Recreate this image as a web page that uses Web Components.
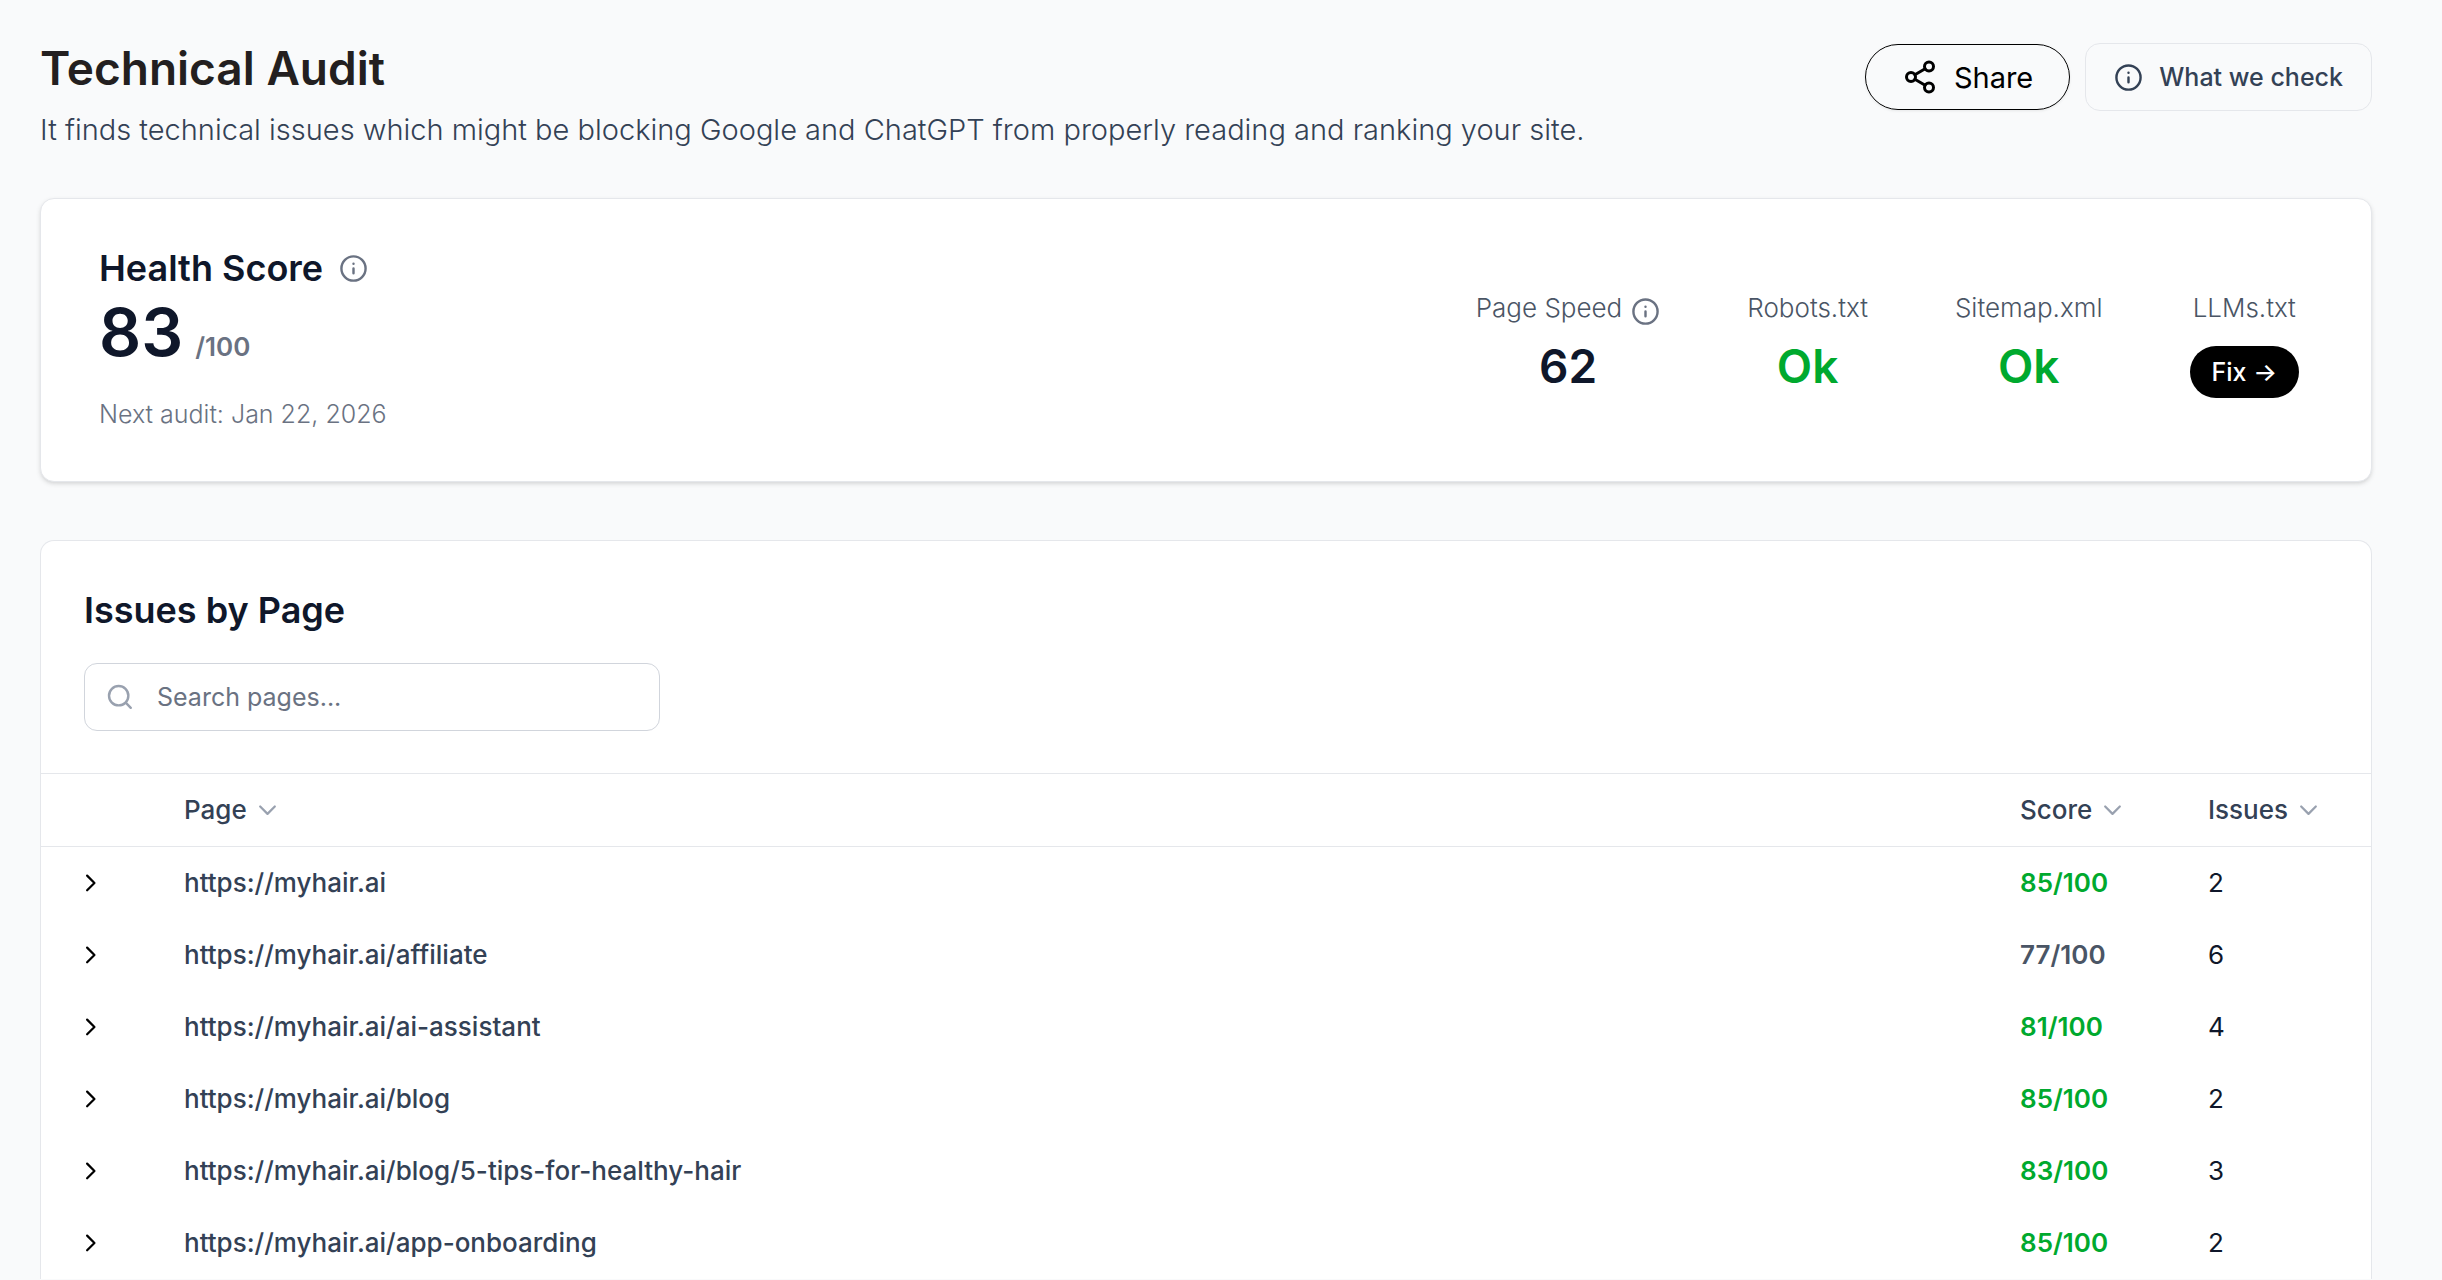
<!DOCTYPE html>
<html lang="en">
<head>
<meta charset="utf-8">
<title>Technical Audit</title>
<style>
body{
    margin: 0;
    background: #f9fafb;
    color: #0f172a;
    font-family: Inter, "Liberation Sans", sans-serif;
    font-size: 26px;
    line-height: 36px;
}
</style>
</head>
<body>
<audit-page>
    <audit-header slot="header" heading="Technical Audit">
        It finds technical issues which might be blocking Google and ChatGPT from properly reading and ranking your site.
    </audit-header>
    <health-card score="83" next="Jan 22, 2026">
        <stat-item label="Page Speed" info>62</stat-item>
        <stat-item label="Robots.txt" state="ok">Ok</stat-item>
        <stat-item label="Sitemap.xml" state="ok">Ok</stat-item>
        <stat-item label="LLMs.txt" state="fix">Fix →</stat-item>
    </health-card>
    <issues-card></issues-card>
</audit-page>

<script>
const ICONS = {
    info: '<circle cx="12" cy="12" r="10"/><path d="M12 16v-4M12 8h.01"/>',
    share: '<circle cx="18" cy="5" r="3"/><circle cx="6" cy="12" r="3"/><circle cx="18" cy="19" r="3"/><path d="M8.59 13.51l6.83 3.98M15.41 6.51l-6.82 3.98"/>',
    search: '<circle cx="10.5" cy="10.5" r="8"/><path d="M16.3 16.3L20.5 20.5"/>',
    down: '<path d="M5.5 8.5l6.500 6.500 6.500-6.500"/>',
    right: '<path d="M9 5l6.500 6.500-6.500 6.500"/>'
};

class UiIcon extends HTMLElement{
    constructor(){
        super();
        this.attachShadow({mode: 'open'});
    }

    connectedCallback(){
        const size = this.getAttribute('size') || 29;
        this.shadowRoot.innerHTML = `
        <style>
        :host{
            display: inline-flex;
            flex: none;
        }
        </style>
        <svg width="${size}" height="${size}" viewBox="0 0 24 24" fill="none" stroke="currentColor"
            stroke-width="2" stroke-linecap="round" stroke-linejoin="round" aria-hidden="true">${ICONS[this.getAttribute('name')]}</svg>
        `;
    }
}

class AuditPage extends HTMLElement{
    constructor(){
        super();
        this.attachShadow({mode: 'open'}).innerHTML = `
        <style>
        :host{
            display: block;
            padding: 38px 70px 0 40px;
        }
        main{
            display: flex;
            flex-direction: column;
            gap: 58px;
            margin-top: 46px;
        }
        </style>
        <slot name="header"></slot>
        <main><slot></slot></main>
        `;
    }
}

class AuditHeader extends HTMLElement{
    constructor(){
        super();
        this.attachShadow({mode: 'open'}).innerHTML = `
        <style>
        :host{
            display: flex;
            justify-content: space-between;
            align-items: flex-start;
        }
        h1{
            margin: 0;
            color: #231f20;
            font-size: 46px;
            font-weight: 600;
            line-height: 60px;
        }
        p{
            margin: 10px 0 0;
            color: #334155;
            font-size: 29px;
            font-weight: 300;
            line-height: 44px;
        }
        .actions{
            display: flex;
            align-items: center;
            gap: 15px;
            padding-top: 5px;
        }
        button{
            display: flex;
            align-items: center;
            box-sizing: border-box;
            font-family: inherit;
            background: transparent;
        }
        .share{
            height: 66px;
            padding: 0 36px;
            gap: 16px;
            border: 1px solid #000;
            border-radius: 33px;
            color: #000;
            font-size: 29px;
            box-shadow: 0 1px 3px rgba(0,0,0,0.08);
        }
        .check{
            height: 68px;
            padding: 0 28px;
            gap: 16px;
            border: 1px solid #e5e7eb;
            border-radius: 15px;
            color: #334155;
            font-size: 25px;
            font-weight: 500;
        }
        </style>
        <div>
            <h1></h1>
            <p><slot></slot></p>
        </div>
        <div class="actions">
            <button class="share" type="button"><ui-icon name="share" size="36"></ui-icon>Share</button>
            <button class="check" type="button"><ui-icon name="info"></ui-icon>What we check</button>
        </div>
        `;
    }

    connectedCallback(){
        this.shadowRoot.querySelector('h1').textContent = this.getAttribute('heading');
    }
}

class HealthCard extends HTMLElement{
    constructor(){
        super();
        this.attachShadow({mode: 'open'}).innerHTML = `
        <style>
        :host{
            display: flex;
            justify-content: space-between;
            align-items: center;
            padding: 43px 72px 47px 58px;
            border: 1px solid #e5e7eb;
            border-radius: 14px;
            background: #fff;
            box-shadow: 0 2px 5px rgba(0,0,0,0.1), 0 2px 4px -2px rgba(0,0,0,0.1);
        }
        h2{
            display: flex;
            align-items: center;
            gap: 16px;
            margin: 0;
            font-size: 36px;
            font-weight: 600;
            line-height: 52px;
        }
        ui-icon{
            color: #6a7282;
        }
        .score{
            display: flex;
            align-items: baseline;
            gap: 12px;
            font-weight: 600;
        }
        .value{
            font-size: 66px;
            line-height: 76px;
        }
        .max{
            color: #6a7282;
        }
        .next{
            margin: 24px 0 0;
            color: #6a7282;
            font-size: 25px;
            font-weight: 300;
            line-height: 40px;
        }
        .stats{
            display: flex;
            gap: 87px;
            padding-top: 12px;
        }
        </style>
        <div>
            <h2>Health Score <ui-icon name="info"></ui-icon></h2>
            <div class="score"><span class="value"></span><span class="max">/100</span></div>
            <p class="next"></p>
        </div>
        <div class="stats"><slot></slot></div>
        `;
    }

    connectedCallback(){
        this.shadowRoot.querySelector('.value').textContent = this.getAttribute('score');
        this.shadowRoot.querySelector('.next').textContent = 'Next audit: ' + this.getAttribute('next');
    }
}

class StatItem extends HTMLElement{
    constructor(){
        super();
        this.attachShadow({mode: 'open'});
    }

    connectedCallback(){
        const info = this.hasAttribute('info') ? '<ui-icon name="info"></ui-icon>' : '';
        const tag = this.getAttribute('state') == 'fix' ? 'button' : 'strong';
        this.shadowRoot.innerHTML = `
        <style>
        :host{
            display: flex;
            flex-direction: column;
            align-items: center;
            gap: 14px;
        }
        .label{
            display: flex;
            align-items: flex-end;
            gap: 9px;
            height: 36px;
            color: #4a5565;
            font-weight: 300;
        }
        ui-icon{
            color: #6a7282;
        }
        strong{
            font-size: 46px;
            font-weight: 600;
            line-height: 52px;
        }
        :host([state="ok"]) strong{
            color: #00a92e;
        }
        button{
            height: 52px;
            margin: 6px 0 0;
            padding: 0 22px;
            border: 0;
            border-radius: 26px;
            background: #000;
            color: #fff;
            font-family: inherit;
            font-size: 25px;
            font-weight: 500;
        }
        </style>
        <div class="label">${this.getAttribute('label')}${info}</div>
        <${tag}><slot></slot></${tag}>
        `;
    }
}

class IssuesCard extends HTMLElement{
    constructor(){
        super();
        this.attachShadow({mode: 'open'});
        this.rows = [
            ['https://myhair.ai', 85, 2],
            ['https://myhair.ai/affiliate', 77, 6],
            ['https://myhair.ai/ai-assistant', 81, 4],
            ['https://myhair.ai/blog', 85, 2],
            ['https://myhair.ai/blog/5-tips-for-healthy-hair', 83, 3],
            ['https://myhair.ai/app-onboarding', 85, 2]
        ];
    }

    connectedCallback(){
        const head = ['Page', 'Score', 'Issues'].map(name => `
            <th scope="col"><button type="button">${name}<ui-icon name="down" size="27"></ui-icon></button></th>`).join('');

        const body = this.rows.map(([url, score, issues]) => `
            <tr>
                <td class="toggle"><button type="button" aria-label="Show issues"><ui-icon name="right" size="27"></ui-icon></button></td>
                <td class="url">${url}</td>
                <td class="score ${score >= 80 ? 'good' : ''}">${score}/100</td>
                <td>${issues}</td>
            </tr>`).join('');

        this.shadowRoot.innerHTML = `
        <style>
        :host{
            display: block;
            border: 1px solid #e5e7eb;
            border-bottom: 0;
            border-radius: 14px 14px 0 0;
            background: #fff;
        }
        .top{
            padding: 43px 43px 42px;
        }
        h2{
            margin: 0 0 26px;
            font-size: 36px;
            font-weight: 600;
            line-height: 53px;
        }
        .search{
            display: flex;
            align-items: center;
            gap: 22px;
            box-sizing: border-box;
            width: 576px;
            height: 68px;
            padding: 0 21px;
            border: 1px solid #d1d5dc;
            border-radius: 13px;
        }
        .search ui-icon{
            color: #99a1af;
        }
        input{
            flex: 1;
            min-width: 0;
            padding: 0;
            border: 0;
            outline: 0;
            background: transparent;
            color: #0f172a;
            font: inherit;
            font-size: 25px;
        }
        input::placeholder{
            color: #6a7282;
            opacity: 1;
        }
        table{
            width: 100%;
            table-layout: fixed;
            border-collapse: collapse;
        }
        .c-toggle{
            width: 143px;
        }
        .c-score{
            width: 188px;
        }
        .c-issues{
            width: 163px;
        }
        th, td{
            height: 72px;
            padding: 0;
            text-align: left;
        }
        thead tr{
            border-top: 1px solid #e5e7eb;
            border-bottom: 1px solid #e5e7eb;
        }
        button{
            display: flex;
            align-items: center;
            padding: 0;
            border: 0;
            background: transparent;
            font: inherit;
        }
        th button{
            gap: 7px;
            color: #334155;
            font-weight: 500;
        }
        th ui-icon{
            color: #99a1af;
        }
        .toggle button{
            margin-left: 36px;
            color: #000;
        }
        .url{
            color: #334155;
            font-weight: 500;
        }
        .score{
            color: #4a5565;
            font-weight: 600;
        }
        .score.good{
            color: #00a92e;
        }
        </style>
        <div class="top">
            <h2>Issues by Page</h2>
            <label class="search"><ui-icon name="search"></ui-icon><input type="text" placeholder="Search pages..." aria-label="Search pages"></label>
        </div>
        <table>
            <colgroup><col class="c-toggle"><col><col class="c-score"><col class="c-issues"></colgroup>
            <thead><tr><td></td>${head}</tr></thead>
            <tbody>${body}</tbody>
        </table>
        `;
    }
}

customElements.define('ui-icon', UiIcon);
customElements.define('audit-page', AuditPage);
customElements.define('audit-header', AuditHeader);
customElements.define('health-card', HealthCard);
customElements.define('stat-item', StatItem);
customElements.define('issues-card', IssuesCard);
</script>
</body>
</html>
